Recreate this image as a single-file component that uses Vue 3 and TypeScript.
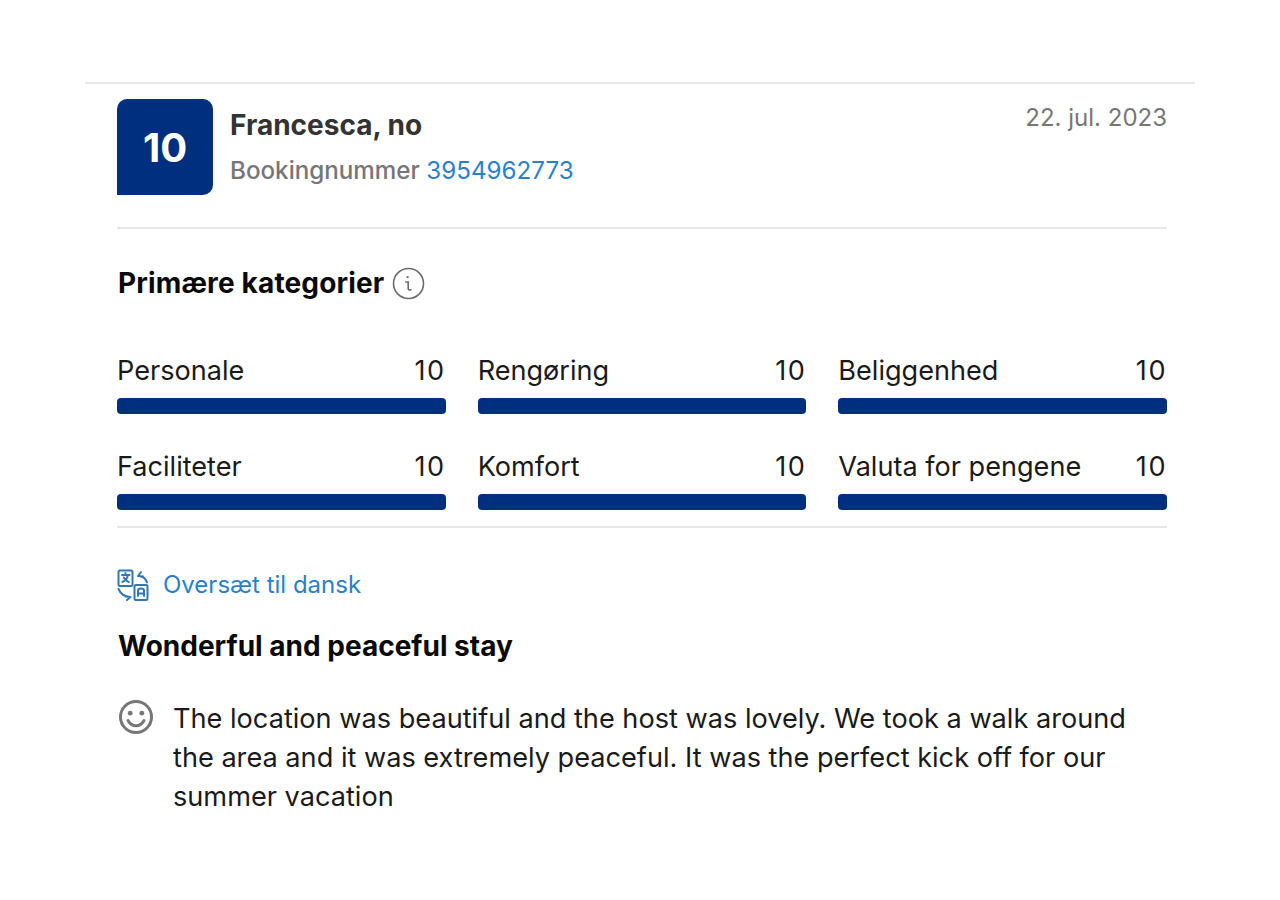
<script setup lang="ts">
const categories: { label: string; score: number }[] = [
  { label: 'Personale', score: 10 },
  { label: 'Rengøring', score: 10 },
  { label: 'Beliggenhed', score: 10 },
  { label: 'Faciliteter', score: 10 },
  { label: 'Komfort', score: 10 },
  { label: 'Valuta for pengene', score: 10 },
]
</script>

<template>
  <div class="page">
    <article class="review">
      <header class="head">
        <div class="score">10</div>
        <div class="who">
          <div class="name">Francesca, no</div>
          <div class="booking">Bookingnummer <a class="link">3954962773</a></div>
        </div>
        <div class="date">22. jul. 2023</div>
      </header>

      <section class="cats">
        <h2 class="cats-title">
          Primære kategorier
          <svg class="info" width="33" height="33" viewBox="0 0 33 33" fill="none" stroke="#6b6b6b">
            <circle cx="16.5" cy="16.5" r="15" stroke-width="1.6" />
            <circle cx="15.6" cy="10.2" r="1.1" fill="#6b6b6b" stroke="none" />
            <path d="M13.8 15h2.4v6.2c0 1.6 1 2.2 2.8 1.6" stroke-width="1.6" stroke-linecap="round" />
          </svg>
        </h2>
        <div class="grid">
          <div v-for="c in categories" :key="c.label" class="cat">
            <div class="cat-row"><span>{{ c.label }}</span><span class="num">{{ c.score }}</span></div>
            <div class="bar" :style="{ width: c.score * 10 + '%' }"></div>
          </div>
        </div>
      </section>

      <section class="body">
        <a class="translate">
          <svg width="32" height="32" viewBox="0 0 32 32" fill="none" stroke="#2f78b8" stroke-width="2" stroke-linecap="round" stroke-linejoin="round">
            <rect x="1.5" y="1.5" width="14" height="15.5" rx="1.5" />
            <path d="M5 6h7.500M8.500 4v2M11 6c-.6 3-2.600 5.600-5.500 7M6.800 8.500c1 2 2.700 3.600 5 4.600" />
            <rect x="17.500" y="16" width="13" height="15" rx="1.500" />
            <path d="M21 27v-5.500c0-1.200 1-2 3-2s3 .8 3 2V27M21 24.500h6" />
            <path d="M21 7l3-4M21 7l5 .6M21.500 7c4.500 .3 7.500 2.500 8.500 6.500" />
            <path d="M13.500 28l-3.500 3M13.500 28l-5-.6M13 28c-5-.3-9.500-3.500-11.500-8" />
          </svg>
          <span>Oversæt til dansk</span>
        </a>
        <h3 class="title">Wonderful and peaceful stay</h3>
        <div class="comment">
          <svg class="smile" width="36" height="36" viewBox="0 0 36 36" fill="none" stroke="#777" stroke-width="3" stroke-linecap="round">
            <circle cx="18" cy="18" r="15.500" />
            <circle cx="12.200" cy="14.200" r="2.400" fill="#777" stroke="none" />
            <circle cx="23.800" cy="14.200" r="2.400" fill="#777" stroke="none" />
            <path d="M10 21.500c2 3.800 4.800 5.300 8 5.300s6-1.500 8-5.300" />
          </svg>
          <p>The location was beautiful and the host was lovely. We took a walk around the area and it was extremely peaceful. It was the perfect kick off for our summer vacation</p>
        </div>
      </section>
    </article>
  </div>
</template>

<style>
body { background: #fff; }
</style>

<style scoped>
.page {
  min-height: 900px;
  box-sizing: border-box;
  padding: 82px 85px 0;
  background: #fff;
  font-family: Inter, "Liberation Sans", sans-serif;
  color: #111;
}
.review {
  border-top: 2px solid #e6e6e6;
  padding: 15px 28px 0 32px;
}
.head {
  display: flex;
  align-items: flex-start;
  padding-bottom: 32px;
  border-bottom: 2px solid #e6e6e6;
}
.score {
  width: 96px;
  height: 96px;
  flex: none;
  display: flex;
  align-items: center;
  justify-content: center;
  background: #002f80;
  color: #fff;
  font-size: 40px;
  font-weight: 700;
  border-radius: 10px 10px 10px 0;
}
.who { margin-left: 17px; flex: 1; }
.name {
  font-size: 28px;
  font-weight: 700;
  color: #333;
  line-height: 34px;
  margin-top: 9px;
}
.booking {
  font-size: 24.2px;
  font-weight: 500;
  line-height: 30px;
  margin-top: 14px;
  color: #767676;
}
.link { color: #2a7fc9; font-size: 24.2px; font-weight: 400; }
.date {
  font-size: 24px;
  line-height: 30px;
  color: #767676;
  margin-top: 4px;
}
.cats { border-bottom: 2px solid #e6e6e6; padding-bottom: 16px; }
.cats-title {
  display: flex;
  align-items: center;
  gap: 8px;
  margin: 37px 0 0 1px;
  font-size: 28px;
  font-weight: 700;
  letter-spacing: 0.15px;
  line-height: 34px;
  color: #0a0a0a;
}
.grid {
  display: grid;
  grid-template-columns: repeat(3, 1fr);
  gap: 36px 32px;
  margin-top: 54px;
}
.cat-row {
  display: flex;
  justify-content: space-between;
  font-size: 27.1px;
  line-height: 34px;
  color: #1a1a1a;
  margin-bottom: 10px;
}
.num { letter-spacing: 1.5px; }
.bar {
  height: 16px;
  background: #002f80;
  border-radius: 4px;
}
.body { padding-top: 41px; }
.translate {
  display: flex;
  align-items: center;
  gap: 14px;
  font-size: 24px;
  line-height: 32px;
  color: #2a7fc9;
}
.title {
  margin: 28px 0 0 1px;
  font-size: 28px;
  font-weight: 700;
  line-height: 34px;
  color: #0a0a0a;
}
.comment {
  display: flex;
  align-items: flex-start;
  margin-top: 36px;
}
.smile { flex: none; margin: 0 18px 0 1px; }
.comment p {
  margin: 0 0 0 1px;
  font-size: 27.15px;
  line-height: 39px;
  color: #1a1a1a;
}
</style>
